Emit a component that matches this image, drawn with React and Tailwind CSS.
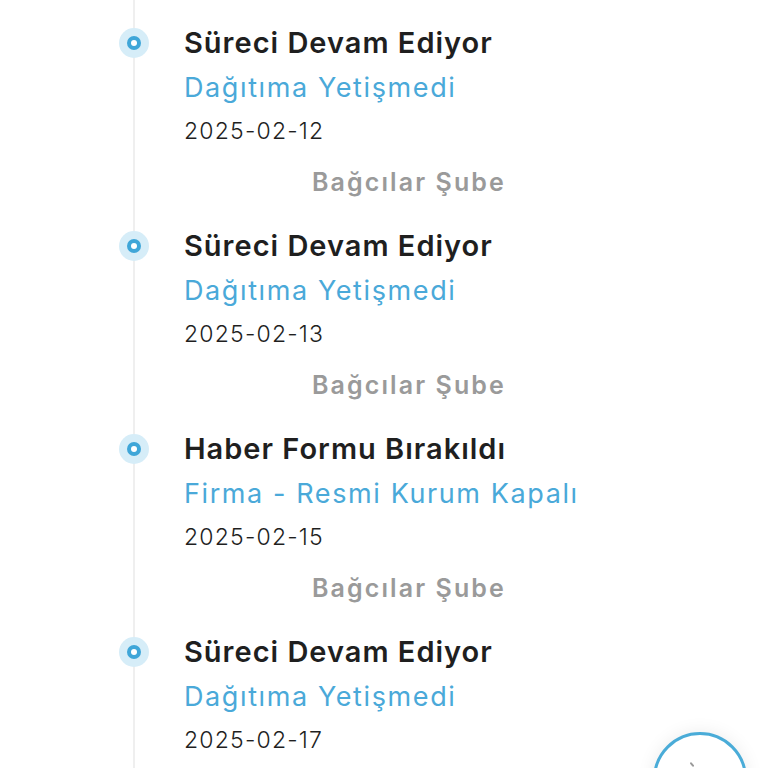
import React from "react";

const items = [
  { title: "Süreci Devam Ediyor", sub: "Dağıtıma Yetişmedi", date: "2025-02-12" },
  { title: "Süreci Devam Ediyor", sub: "Dağıtıma Yetişmedi", date: "2025-02-13" },
  { title: "Haber Formu Bırakıldı", sub: "Firma - Resmi Kurum Kapalı", date: "2025-02-15" },
  { title: "Süreci Devam Ediyor", sub: "Dağıtıma Yetişmedi", date: "2025-02-17" },
];

function Dot() {
  return (
    <div className="relative z-10 mt-[8px] shrink-0 w-[30px] h-[30px] rounded-full bg-[#d6edf8] flex items-center justify-center">
      <div className="w-[14px] h-[14px] rounded-full bg-[#3fa6d8] flex items-center justify-center">
        <div className="w-[6px] h-[6px] rounded-full bg-white" />
      </div>
    </div>
  );
}

export default function App() {
  return (
    <div className="relative w-[768px] h-[768px] overflow-hidden bg-white" style={{ fontFamily: "Inter, 'Noto Sans', sans-serif" }}>
      <div className="absolute left-[133px] top-0 bottom-0 w-[2px] bg-[#efefef]" />
      <div className="relative flex flex-col pl-[119px] pt-[20px]">
        {items.map((it, i) => (
          <div key={i} className="flex flex-row gap-[35px] pb-[11px]">
            <Dot />
            <div className="flex flex-col">
              <div className="text-[29px] leading-[46px] font-semibold text-[#1f1f1f] tracking-[1px] whitespace-nowrap">{it.title}</div>
              <div className="text-[27px] leading-[44px] font-normal text-[#4aa9d9] tracking-[1.6px] whitespace-nowrap">{it.sub}</div>
              <div className="text-[23px] leading-[42px] font-light text-[#1f1f1f] tracking-[1.2px]">{it.date}</div>
              <div className="pl-[128px] text-[25px] leading-[60px] font-semibold text-[#9a9a9a] tracking-[2.1px] whitespace-nowrap">Bağcılar Şube</div>
            </div>
          </div>
        ))}
      </div>
      <div className="absolute left-[653px] top-[732px] w-[94px] h-[94px] rounded-full border-[3px] border-[#4aacd8] bg-white shadow-[0_0_18px_rgba(0,0,0,0.08)]">
        <div className="absolute left-[35px] top-[27px] w-[2px] h-[5px] rotate-[-40deg] bg-[#9a9a9a] rounded-full" />
      </div>
    </div>
  );
}
